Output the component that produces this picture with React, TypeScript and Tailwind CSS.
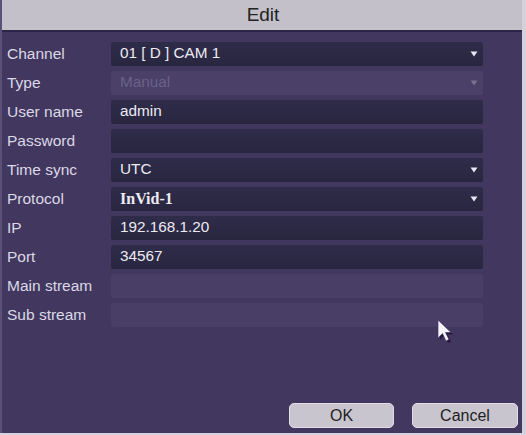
import React from 'react';

type Row = {
  label: string;
  value?: string;
  kind: 'select' | 'input' | 'disabled' | 'blank';
  bold?: boolean;
};

const rows: Row[] = [
  { label: 'Channel', value: '01 [ D ] CAM 1', kind: 'select' },
  { label: 'Type', value: 'Manual', kind: 'disabled' },
  { label: 'User name', value: 'admin', kind: 'input' },
  { label: 'Password', value: '', kind: 'input' },
  { label: 'Time sync', value: 'UTC', kind: 'select' },
  { label: 'Protocol', value: 'InVid-1', kind: 'select', bold: true },
  { label: 'IP', value: '192.168.1.20', kind: 'input' },
  { label: 'Port', value: '34567', kind: 'input' },
  { label: 'Main stream', kind: 'blank' },
  { label: 'Sub stream', kind: 'blank' },
];

const Caret = ({ dim }: { dim?: boolean }) => (
  <svg width="8" height="6" viewBox="0 0 8 6" className={dim ? 'opacity-30' : ''}>
    <path d="M0.5 0.5 H7.5 L4 5.5 Z" fill="#e8e6f0" />
  </svg>
);

const Field = ({ row }: { row: Row }) => {
  const base = 'flex-1 h-[24px] rounded-[2px] flex items-center justify-between pl-[9px] pr-[5px]';
  if (row.kind === 'disabled') {
    return (
      <div className={`${base} bg-[#4a4068] text-[#6b6288]`}>
        <span>{row.value}</span>
        <Caret dim />
      </div>
    );
  }
  if (row.kind === 'blank') {
    return <div className={`${base} bg-[#483e66]`} />;
  }
  return (
    <div className={`${base} bg-gradient-to-b from-[#2f2c4a] to-[#28263f] text-[#eceaf2]`}>
      <span
        className={row.bold ? 'font-bold text-[16px]' : ''}
        style={row.bold ? { fontFamily: '"Liberation Serif", serif' } : undefined}
      >
        {row.value}
      </span>
      {row.kind === 'select' && <Caret />}
    </div>
  );
};

export default function App() {
  return (
    <div
      className="w-[526px] h-[435px] bg-[#d4d1da] overflow-hidden"
      style={{ fontFamily: '"Liberation Sans", Arial, sans-serif' }}
    >
      <div className="relative w-[522px] h-[433px] flex flex-col bg-[#41375f] border-l-2 border-[#5a5078]">
        {/* Title bar */}
        <div className="h-[32px] bg-[#c3c0c9] flex items-center justify-center border-b-2 border-[#2c2548]">
          <span className="text-[19px] text-[#222222] pl-[2px]">Edit</span>
        </div>

        {/* Form */}
        <div className="flex flex-col pt-[7px] pr-[39px]">
          {rows.map((row) => (
            <div key={row.label} className="flex items-center h-[29px]">
              <div className="w-[109px] pl-[5px] text-[15.5px] text-[#dcd8e6]">{row.label}</div>
              <div className="flex-1 flex text-[15.3px]">
                <Field row={row} />
              </div>
            </div>
          ))}
        </div>

        {/* Buttons */}
        <div className="mt-auto flex justify-end gap-[18px] pr-[4px] pb-[5px]">
          <button className="w-[105px] h-[25px] rounded-[5px] bg-[#c8c5cf] text-[16px] text-[#1e1e1e] border border-[#e0dde6]">
            OK
          </button>
          <button className="w-[106px] h-[25px] rounded-[5px] bg-[#c8c5cf] text-[16px] text-[#1e1e1e] border border-[#e0dde6]">
            Cancel
          </button>
        </div>

        {/* Mouse pointer */}
        <svg className="absolute left-[434px] top-[319px]" width="20" height="28" viewBox="0 0 20 28">
          <path d="M4 3 L4 21 L8.5 16.5 L12 24 L15 22.5 L11.5 15.5 L17 15.5 Z" fill="#2a1440" />
          <path d="M2 1 L2 19 L6.5 14.5 L10 22 L13 20.5 L9.5 13.5 L15 13.5 Z" fill="#f4f4f8" stroke="#3a3060" strokeWidth="0.6" />
        </svg>
      </div>
    </div>
  );
}
